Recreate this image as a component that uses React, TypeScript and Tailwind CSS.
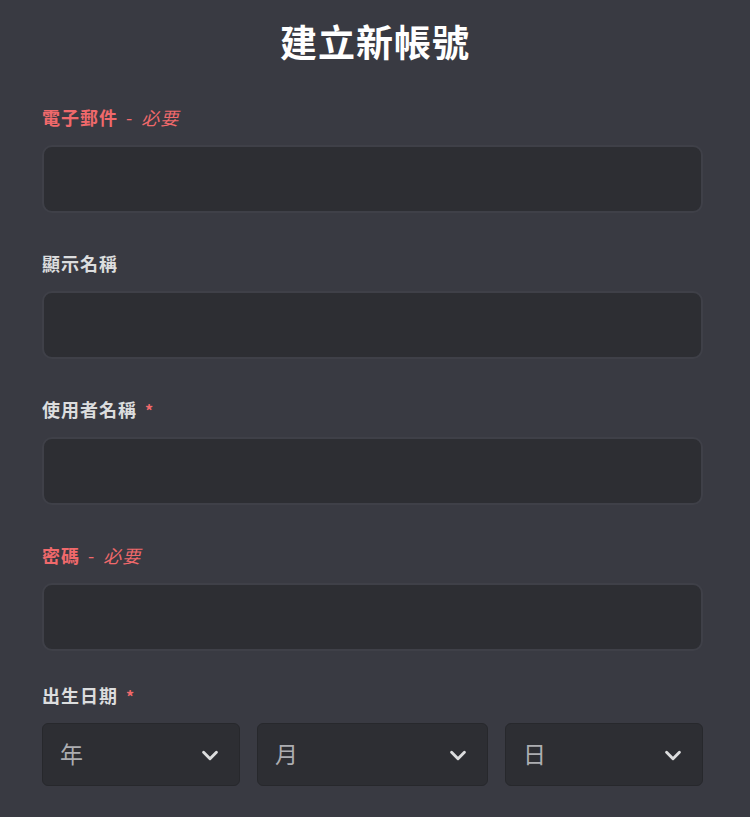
import React from "react";

const font = { fontFamily: '"Noto Sans CJK TC", "Noto Sans", sans-serif' };

function Chevron() {
  return (
    <svg width="22" height="22" viewBox="0 0 24 24" fill="none" stroke="#dcddde" strokeWidth="3.2" strokeLinecap="round" strokeLinejoin="round">
      <path d="M5 9l7 7 7-7" />
    </svg>
  );
}

function Label({ label, required, error }: { label: string; required?: boolean; error?: boolean }) {
  return (
    <div className="h-[28px] flex items-center text-[18px] font-bold tracking-[1px]">
      {error ? (
        <span className="text-[#f0696b]">
          {label}
          <span className="font-normal ml-[8px] mr-[8px]">-</span>
          <i className="italic font-normal">必要</i>
        </span>
      ) : (
        <span className="text-[#dcddde]">
          {label}
          {required && <span className="text-[#f0696b] ml-[8px] text-[16px]">*</span>}
        </span>
      )}
    </div>
  );
}

function Field(props: { label: string; required?: boolean; error?: boolean }) {
  return (
    <div className="flex flex-col">
      <Label {...props} />
      <div className="mt-[14px] h-[68px] rounded-[10px] bg-[#2d2e33] border-2 border-[#3f4048]" />
    </div>
  );
}

function Select({ text, w }: { text: string; w: string }) {
  return (
    <div className={`${w} h-[63px] rounded-[6px] bg-[#2d2e33] border border-[#27282c] flex items-center justify-between pl-[17px] pr-[18px]`}>
      <span className="text-[23px] leading-[30px] mb-[4px] text-[#acadb1]">{text}</span>
      <Chevron />
    </div>
  );
}

export default function App() {
  return (
    <div className="w-[750px] h-[817px] bg-[#393a42] overflow-hidden" style={font}>
      <div className="pt-[15px] text-center text-white text-[37px] font-bold leading-[52px] tracking-[1px]">建立新帳號</div>
      <div className="ml-[42px] w-[661px] mt-[36px] flex flex-col gap-[36px]">
        <Field label="電子郵件" error />
        <Field label="顯示名稱" />
        <Field label="使用者名稱" required />
        <Field label="密碼" error />
        <div className="flex flex-col -mt-[6px]">
          <Label label="出生日期" required />
          <div className="mt-[14px] flex justify-between">
            <Select text="年" w="w-[198px]" />
            <Select text="月" w="w-[231px]" />
            <Select text="日" w="w-[198px]" />
          </div>
        </div>
      </div>
    </div>
  );
}
